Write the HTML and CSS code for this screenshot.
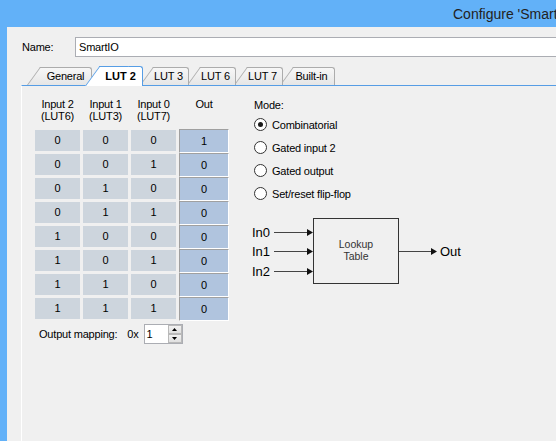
FILE: index.html
```html
<!DOCTYPE html>
<html>
<head>
<meta charset="utf-8">
<link rel="stylesheet" href="styles.css">
</head>
<body>
<div class="window">
  <div class="titlebar"><span class="title">Configure 'SmartIO'</span></div>
  <div class="client">
    <div class="name-row">
      <span class="name-label">Name:</span>
      <div class="name-input">SmartIO</div>
    </div>
    <div class="tabs">
      <div class="tab t-general">General</div>
      <div class="tab t-lut2 selected">LUT 2</div>
      <div class="tab t-lut3">LUT 3</div>
      <div class="tab t-lut6">LUT 6</div>
      <div class="tab t-lut7">LUT 7</div>
      <div class="tab t-built">Built-in</div>
    </div>
    <div class="panel">
      <div class="lut">
        <div class="truth">
          <div class="thead">
            <div>Input 2<br>(LUT6)</div>
            <div>Input 1<br>(LUT3)</div>
            <div>Input 0<br>(LUT7)</div>
            <div>Out</div>
          </div>
          <div class="grid">
            <div class="cell">0</div><div class="cell">0</div><div class="cell">0</div><div class="cell out">1</div>
            <div class="cell">0</div><div class="cell">0</div><div class="cell">1</div><div class="cell out">0</div>
            <div class="cell">0</div><div class="cell">1</div><div class="cell">0</div><div class="cell out">0</div>
            <div class="cell">0</div><div class="cell">1</div><div class="cell">1</div><div class="cell out">0</div>
            <div class="cell">1</div><div class="cell">0</div><div class="cell">0</div><div class="cell out">0</div>
            <div class="cell">1</div><div class="cell">0</div><div class="cell">1</div><div class="cell out">0</div>
            <div class="cell">1</div><div class="cell">1</div><div class="cell">0</div><div class="cell out">0</div>
            <div class="cell">1</div><div class="cell">1</div><div class="cell">1</div><div class="cell out">0</div>
          </div>
          <div class="mapping">
            <span>Output mapping:</span>
            <span class="hex">0x</span>
            <div class="spin">
              <div class="spin-value">1</div>
              <div class="spin-buttons">
                <div class="spin-btn"><svg width="5" height="3" viewBox="0 0 5 3"><polygon points="2.5,0 5,3 0,3" fill="#000"/></svg></div>
                <div class="spin-btn"><svg width="5" height="3" viewBox="0 0 5 3"><polygon points="0,0 5,0 2.5,3" fill="#000"/></svg></div>
              </div>
            </div>
          </div>
        </div>
        <div class="mode">
          <div class="mode-title">Mode:</div>
          <div class="radios">
            <div class="radio"><span class="radio-circle checked"></span><span>Combinatorial</span></div>
            <div class="radio"><span class="radio-circle"></span><span>Gated input 2</span></div>
            <div class="radio"><span class="radio-circle"></span><span>Gated output</span></div>
            <div class="radio"><span class="radio-circle"></span><span>Set/reset flip-flop</span></div>
          </div>
          <svg class="diagram" width="230" height="80" viewBox="0 0 230 80">
            <text x="4" y="26.5" class="dlabel">In0</text>
            <text x="4" y="46" class="dlabel">In1</text>
            <text x="4" y="65.5" class="dlabel">In2</text>
            <line x1="26" y1="22.5" x2="60" y2="22.5" stroke="#444" stroke-width="1"/>
            <line x1="26" y1="41.5" x2="60" y2="41.5" stroke="#444" stroke-width="1"/>
            <line x1="26" y1="61.5" x2="60" y2="61.5" stroke="#444" stroke-width="1"/>
            <polygon points="59,19 65,22.5 59,26" fill="#111"/>
            <polygon points="59,38 65,41.5 59,45" fill="#111"/>
            <polygon points="59,58 65,61.5 59,65" fill="#111"/>
            <rect x="65.5" y="8.5" width="85" height="65" fill="#f0f0f0" stroke="#333" stroke-width="1"/>
            <text x="108" y="38" class="dbox">Lookup</text>
            <text x="108" y="50" class="dbox">Table</text>
            <line x1="151" y1="41.5" x2="184" y2="41.5" stroke="#444" stroke-width="1"/>
            <polygon points="183,38 189,41.5 183,45" fill="#111"/>
            <text x="192" y="46" class="dlabel">Out</text>
          </svg>
        </div>
      </div>
    </div>
  </div>
</div>
</body>
</html>
```
FILE: styles.css
```css
html, body {
  margin: 0;
  height: 100%;
  overflow: hidden;
}
body {
  background: #f0f0f0;
  font-family: "Liberation Sans", Arial, sans-serif;
  font-size: 11px;
  letter-spacing: -0.2px;
  color: #000;
}
.window {
  width: 900px;
  height: 100%;
  border-left: 7px solid #62b1f8;
  display: flex;
  flex-direction: column;
}
.titlebar {
  height: 27px;
  flex: none;
  background: #62b1f8;
  padding-left: 446px;
  display: flex;
  align-items: center;
  font-size: 14px;
  letter-spacing: 0;
  color: #222;
  white-space: nowrap;
}
.client {
  flex: 1;
  padding-left: 15px;
  display: flex;
  flex-direction: column;
}
.name-row {
  display: flex;
  align-items: center;
  margin-top: 10px;
  height: 20px;
}
.name-label {
  width: 53px;
  flex: none;
}
.name-input {
  width: 800px;
  height: 20px;
  box-sizing: border-box;
  border: 1px solid #abadb3;
  background: #fff;
  padding-left: 3px;
  line-height: 18px;
}
.tabs {
  display: flex;
  align-items: flex-end;
  height: 19px;
  margin-top: 9px;
  padding-left: 18px;
  position: relative;
  z-index: 1;
}
.tab {
  position: relative;
  box-sizing: border-box;
  height: 18px;
  border-top: 1px solid #acacac;
  border-right: 1px solid #acacac;
  border-top-right-radius: 3px;
  background: linear-gradient(#f7f7f7, #e6e6e6);
  text-align: center;
  line-height: 17px;
  white-space: nowrap;
}
.tab::before {
  content: "";
  position: absolute;
  left: -13px;
  top: -1px;
  bottom: 0;
  width: 28px;
  border-top: 1px solid #acacac;
  border-left: 1px solid #acacac;
  background: inherit;
  transform: skewX(-36deg);
  transform-origin: 0 100%;
  z-index: -1;
}
.t-general { width: 52px; z-index: 6; }
.t-lut2 { width: 44px; margin-left: 7px; z-index: 10; }
.t-lut3 { width: 36px; margin-left: 10px; padding-right: 4px; z-index: 5; }
.t-lut6 { width: 36px; margin-left: 11px; padding-right: 4px; z-index: 4; }
.t-lut7 { width: 36px; margin-left: 11px; padding-right: 4px; z-index: 3; }
.t-built { width: 42px; margin-left: 10px; padding-right: 4px; z-index: 2; }
.tab.selected {
  height: 20px;
  margin-bottom: -1px;
  border-color: #569de5;
  background: #fff;
  font-weight: bold;
  letter-spacing: 0;
  line-height: 19px;
  padding-right: 0;
}
.tab.selected::before {
  left: -14px;
  border-color: #569de5;
}
.panel {
  flex: 1;
  margin-left: -1px;
  border-top: 1px solid #569de5;
  border-left: 1px solid #fff;
  padding: 12px 0 0 13px;
}
.lut {
  display: flex;
  gap: 25px;
  align-items: flex-start;
}
.truth {
  width: 194px;
}
.thead, .grid {
  display: grid;
  grid-template-columns: 45px 45px 45px 50px;
  column-gap: 3px;
}
.thead {
  line-height: 12px;
  text-align: center;
}
.grid {
  grid-auto-rows: 24px;
  margin-top: 7px;
}
.cell {
  margin-top: 1px;
  height: 21px;
  line-height: 21px;
  background: #cdd5dd;
  text-align: center;
}
.cell.out {
  margin-top: 0;
  height: 24px;
  box-sizing: border-box;
  border: 1px solid;
  border-color: #a0a0a0 #fff #fff #a0a0a0;
  background: #b0c4de;
  line-height: 22px;
}
.mapping {
  display: flex;
  align-items: center;
  margin-top: 3px;
  padding-left: 4px;
  height: 20px;
}
.hex {
  margin-left: 10px;
}
.spin {
  margin-left: 5px;
  width: 39px;
  height: 20px;
  box-sizing: border-box;
  border: 1px solid #abadb3;
  background: #fff;
  display: flex;
}
.spin-value {
  flex: 1;
  padding-left: 2px;
  line-height: 18px;
}
.spin-buttons {
  width: 14px;
  display: flex;
  flex-direction: column;
}
.spin-btn {
  height: 9px;
  box-sizing: border-box;
  border: 1px solid #b9b9b9;
  background: linear-gradient(#f2f2f2, #e0e0e0);
  display: flex;
  align-items: center;
  justify-content: center;
}
.spin-btn svg {
  display: block;
}
.mode {
  padding-top: 1px;
}
.mode-title {
  line-height: 12px;
}
.radios {
  margin-top: 2px;
}
.radio {
  display: flex;
  align-items: center;
  height: 23px;
  white-space: nowrap;
}
.radio-circle {
  width: 13px;
  height: 13px;
  box-sizing: border-box;
  border: 1px solid #333;
  border-radius: 50%;
  background: #fff;
  margin-right: 5px;
  display: flex;
  align-items: center;
  justify-content: center;
}
.radio-circle.checked::after {
  content: "";
  width: 5px;
  height: 5px;
  border-radius: 50%;
  background: #1a1a1a;
}
.diagram {
  display: block;
  margin-top: 5px;
  margin-left: -6px;
}
.dlabel {
  font-family: "Liberation Sans", Arial, sans-serif;
  font-size: 13px;
  letter-spacing: 0;
  fill: #000;
}
.dbox {
  font-family: "Liberation Sans", Arial, sans-serif;
  font-size: 10.5px;
  letter-spacing: 0;
  fill: #333;
  text-anchor: middle;
}
```
